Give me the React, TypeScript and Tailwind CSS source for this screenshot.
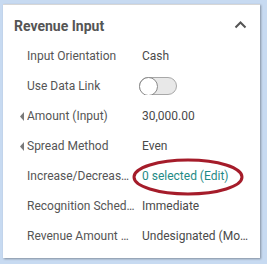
import React from 'react';

interface Row {
  label: string;
  value?: string;
  caret?: boolean;
  kind?: 'toggle' | 'link';
}

const rows: Row[] = [
  { label: 'Input Orientation', value: 'Cash' },
  { label: 'Use Data Link', kind: 'toggle' },
  { label: 'Amount (Input)', value: '30,000.00', caret: true },
  { label: 'Spread Method', value: 'Even', caret: true },
  { label: 'Increase/Decrease Selection', value: '0 selected (Edit)', kind: 'link' },
  { label: 'Recognition Schedule', value: 'Immediate' },
  { label: 'Revenue Amount Designation', value: 'Undesignated (Monthly)' },
];

export default function App() {
  return (
    <div
      className="w-[267px] h-[264px] bg-[#c7daf1] pl-[3px] pt-[4px] overflow-hidden"
      style={{ fontFamily: 'Roboto, "Liberation Sans", sans-serif' }}
    >
      <div className="w-[257px] h-[254px] bg-white border-t border-[#d6d6d6] shadow-[1px_1px_2px_rgba(0,0,0,0.35)]">
        {/* Header */}
        <div className="h-[36px] flex items-start justify-between pl-[11px] pr-[13px] pt-[12px]">
          <h2 className="text-[14px] leading-[18px] font-bold text-[#555]">Revenue Input</h2>
          <svg width="13" height="8" viewBox="0 0 13 8" className="mt-[4px]">
            <path d="M1.5 6.5 L6.5 1.5 L11.5 6.5" fill="none" stroke="#555" strokeWidth="2" />
          </svg>
        </div>

        {/* Rows */}
        <div className="flex flex-col">
          {rows.map((r, i) => (
            <div key={i} className="relative h-[30px] flex items-center text-[12px] text-[#555]">
              <div className="w-[24px] shrink-0 flex justify-end pr-[3px]">
                {r.caret && (
                  <svg width="4" height="9" viewBox="0 0 4 9">
                    <path d="M4 0 L0 4.5 L4 9 Z" fill="#7a7a7a" />
                  </svg>
                )}
              </div>
              <div className="w-[108px] shrink-0 truncate">{r.label}</div>
              <div className="pl-[7px] w-[116px] truncate text-[#4a4a4a]">
                {r.kind === 'toggle' ? (
                  <div className="-ml-[3px] w-[38px] h-[18px] rounded-full bg-[#e8e8e8] border border-[#a8a8a8] flex items-center">
                    <div className="w-[19px] h-[19px] -ml-px rounded-full bg-white border border-[#8a8a8a]" />
                  </div>
                ) : r.kind === 'link' ? (
                  <span className="text-[#1f8a86]">{r.value}</span>
                ) : (
                  r.value
                )}
              </div>
              {r.kind === 'link' && (
                <svg
                  width="112"
                  height="38"
                  viewBox="0 0 112 38"
                  className="absolute left-[129px] top-[-3px] pointer-events-none"
                >
                  <ellipse cx="56" cy="19" rx="54" ry="17" fill="none" stroke="#a51c2a" strokeWidth="3" />
                </svg>
              )}
            </div>
          ))}
        </div>
      </div>
    </div>
  );
}
